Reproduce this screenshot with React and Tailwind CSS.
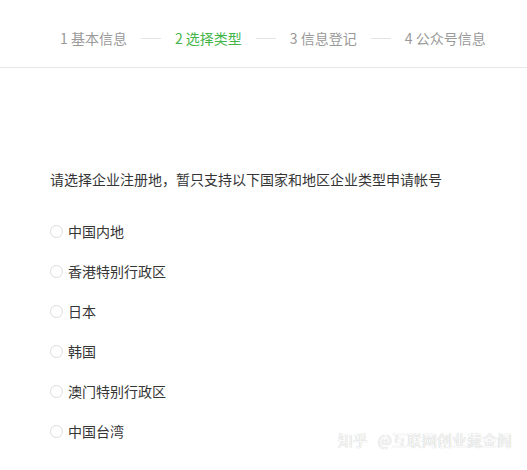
const steps = ['基本信息', '选择类型', '信息登记', '公众号信息'];
const regions = ['中国内地', '香港特别行政区', '日本', '韩国', '澳门特别行政区', '中国台湾'];

export default function App() {
  return (
    <div
      className="relative w-[527px] h-[470px] bg-white overflow-hidden text-[14px]"
      style={{ fontFamily: '"Noto Sans CJK SC", "Noto Sans", sans-serif' }}
    >
      {/* step bar */}
      <div className="h-[68px] border-b border-[#e7e7eb] flex items-center pl-[60px] pt-[10px]">
        {steps.map((s, i) => (
          <div key={i} className="flex items-center">
            {i > 0 && <span className="w-[20px] h-px bg-[#e4e4e4] mx-[14px]" />}
            <span className={i === 1 ? 'text-[#44b549]' : 'text-[#9a9a9a]'}>
              {i + 1} {s}
            </span>
          </div>
        ))}
      </div>

      <div className="pl-[50px] pt-[101px]">
        <p className="h-[20px] leading-[20px] text-[#353535]">请选择企业注册地，暂只支持以下国家和地区企业类型申请帐号</p>
        <ul className="mt-[22px]">
          {regions.map((r) => (
            <li key={r} className="h-[40px] flex items-center text-[#353535]">
              <span className="w-[13px] h-[13px] rounded-full border border-[#dcdcdc] mr-[5px]" />
              {r}
            </li>
          ))}
        </ul>
      </div>

      <div className="absolute right-[15px] bottom-[19px] flex text-[15px] text-[#fafafa] [text-shadow:0_0_1px_#b0b0b0]">
        <span className="mr-[10px]">知乎</span>
        <span>@互联网创业藏金阁</span>
      </div>
    </div>
  );
}
